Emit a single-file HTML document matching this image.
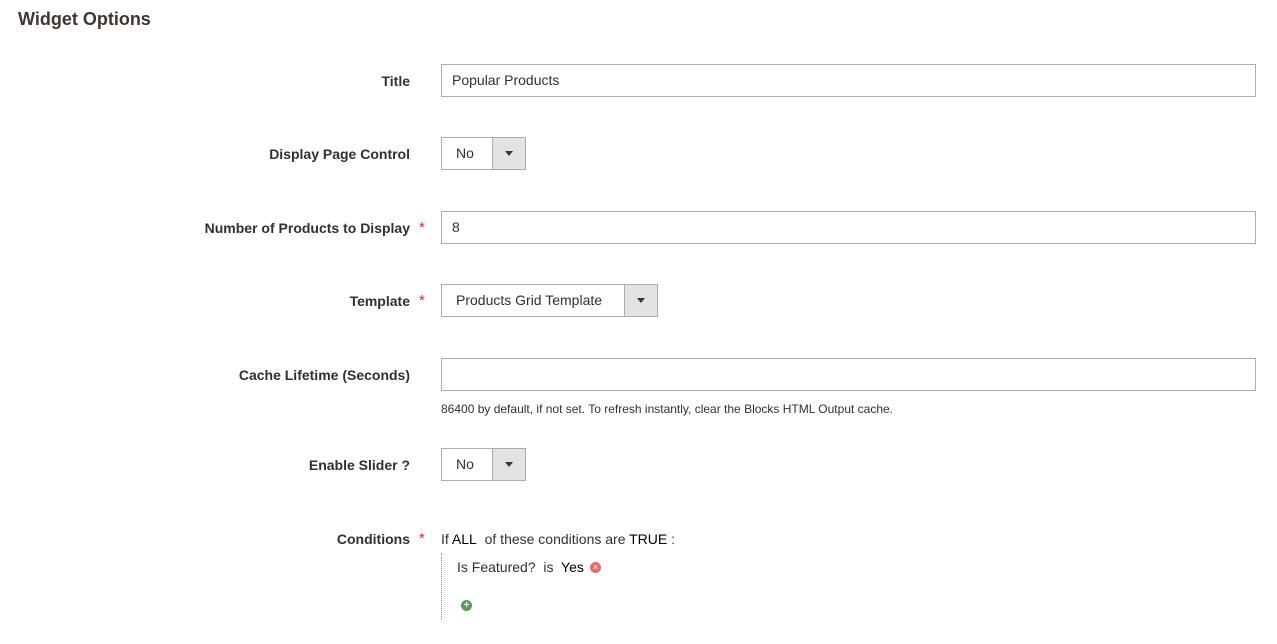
<!DOCTYPE html>
<html><head><style>
body{margin:0;width:1277px;height:644px;background:#fff;font-family:"Liberation Sans",sans-serif;color:#303030;position:relative;overflow:hidden}
.a{position:absolute}
h1{position:absolute;left:18px;top:9px;margin:0;font-size:18px;font-weight:bold;color:#41362f}
.l{position:absolute;right:867px;font-size:14px;font-weight:bold;color:#303030;white-space:nowrap}
.s{position:absolute;left:419px;color:#e22626;font-size:15px}
.i{position:absolute;left:441px;width:813px;height:31px;border:1px solid #adadad;font-size:14px;line-height:31px;padding-left:10px;box-sizing:content-box}
.sel{position:absolute;left:441px;height:31px;border:1px solid #adadad;font-size:14px;line-height:31px}
.sel span{position:absolute;left:14px}
.sel b{position:absolute;right:0;top:0;width:32px;height:31px;background:#e3e3e3;border-left:1px solid #adadad}
.sel b:after{content:"";position:absolute;left:12px;top:13px;border-left:4px solid transparent;border-right:4px solid transparent;border-top:5px solid #41362f}
</style></head><body>
<h1>Widget Options</h1>
<div class="l" style="top:73px">Title</div>
<div class="i" style="top:64px;width:803px">Popular Products</div>
<div class="l" style="top:146px">Display Page Control</div>
<div class="sel" style="top:137px;width:83px"><span>No</span><b></b></div>
<div class="l" style="top:220px">Number of Products to Display</div><div class="s" style="top:219px">*</div>
<div class="i" style="top:211px;width:803px">8</div>
<div class="l" style="top:293px">Template</div><div class="s" style="top:292px">*</div>
<div class="sel" style="top:284px;width:215px"><span>Products Grid Template</span><b></b></div>
<div class="l" style="top:367px">Cache Lifetime (Seconds)</div>
<div class="i" style="top:358px;width:803px"></div>
<div class="a" style="left:441px;top:402px;font-size:12px">86400 by default, if not set. To refresh instantly, clear the Blocks HTML Output cache.</div>
<div class="l" style="top:457px">Enable Slider ?</div>
<div class="sel" style="top:448px;width:83px"><span>No</span><b></b></div>
<div class="l" style="top:531px">Conditions</div><div class="s" style="top:530px">*</div>
<div class="a" style="left:441px;top:531px;font-size:14px">If <span style="color:#000">ALL</span>&nbsp; of these conditions are <span style="color:#000">TRUE</span> :</div>
<div class="a" style="left:441px;top:553px;height:66px;border-left:1px dotted #888"></div>
<div class="a" style="left:457px;top:559px;font-size:14px">Is Featured?&nbsp; is&nbsp; <span style="color:#000">Yes</span></div>
<div class="a" style="left:590px;top:562px;width:11px;height:11px;border-radius:50%;background:#e86a6a;color:#fff;font-size:9px;line-height:11px;text-align:center">×</div>
<div class="a" style="left:461px;top:600px;width:11px;height:11px;border-radius:50%;background:#5a9a5a;color:#fff;font-size:10px;line-height:11px;text-align:center;font-weight:bold">+</div>
</body></html>
